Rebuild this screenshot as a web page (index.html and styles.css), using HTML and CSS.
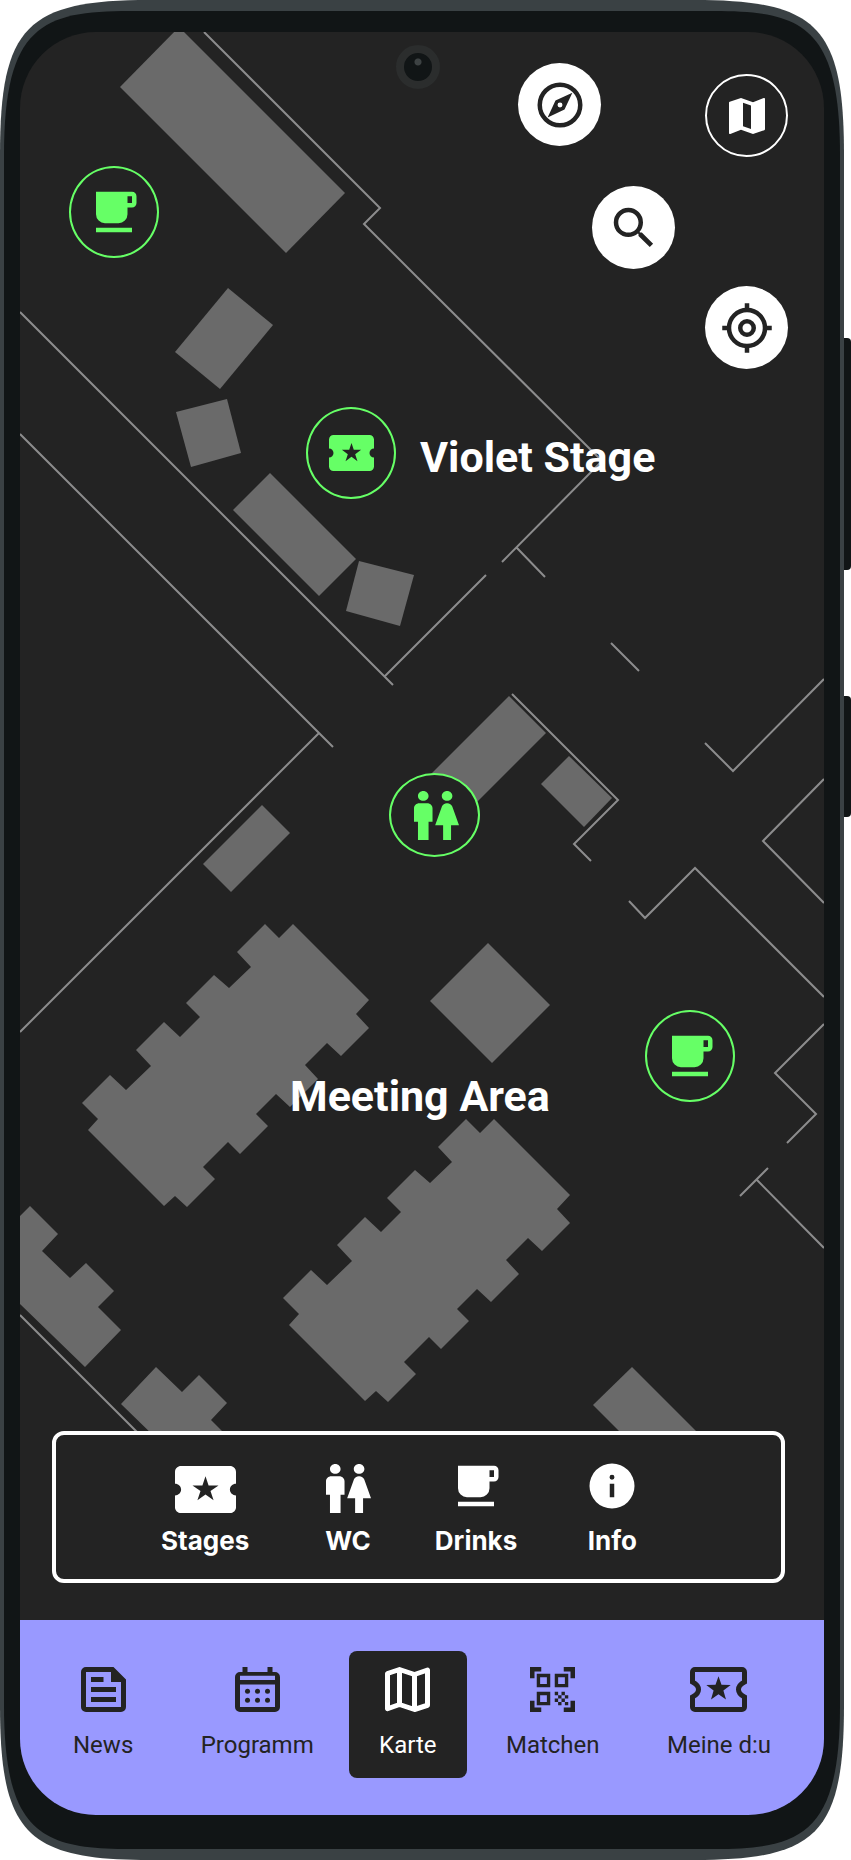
FILE: index.html
```html
<!DOCTYPE html>
<html lang="de">
<head>
  <meta charset="utf-8">
  <meta name="viewport" content="width=device-width, initial-scale=1">
  <title>Karte</title>
  <link rel="stylesheet" href="styles.css">
</head>
<body>

  <!-- shared icons -->
  <svg class="sprite" aria-hidden="true">
    <symbol id="cup" viewBox="0 0 24 24">
      <path fill-rule="evenodd" d="M4 3h16a2 2 0 0 1 2 2v3a2 2 0 0 1-2 2h-2v3a4 4 0 0 1-4 4H8a4 4 0 0 1-4-4zM18 5v3h2V5zM4 19h16v2H4z"/>
    </symbol>
    <symbol id="ticket" viewBox="2 4 20 16" preserveAspectRatio="none">
      <path fill-rule="evenodd" d="M20 12c0-1.100.9-2 2-2V6c0-1.100-.9-2-2-2H4c-1.100 0-2 .9-2 2v4c1.100 0 2 .9 2 2s-.9 2-2 2v4c0 1.100.9 2 2 2h16c1.100 0 2-.9 2-2v-4c-1.100 0-2-.9-2-2zM12 7.500l1.010 3.110h3.270l-2.640 1.920 1.010 3.110L12 13.720l-2.650 1.920 1.010-3.110-2.640-1.920h3.270z"/>
    </symbol>
    <symbol id="wc" viewBox="4 2 17 20" preserveAspectRatio="none">
      <path d="M5.500 22v-7.500H4V9c0-1.100.9-2 2-2h3c1.100 0 2 .9 2 2v5.500H9.500V22h-4zM18 22v-6h3l-2.540-7.630C18.180 7.550 17.420 7 16.560 7h-.12c-.86 0-1.630.55-1.900 1.370L12 16h3v6h3zM7.500 6c1.110 0 2-.89 2-2s-.89-2-2-2-2 .89-2 2 .89 2 2 2zm9 0c1.110 0 2-.89 2-2s-.89-2-2-2-2 .89-2 2 .89 2 2 2z"/>
    </symbol>
  </svg>

  <div class="phone">
    <svg class="phone-frame" viewBox="0 0 844 1860" preserveAspectRatio="none" aria-hidden="true">
      <path fill="#3a4144" d="M150 0H694C817 0 844 26 844 155V1705C844 1834 817 1860 694 1860H150C27 1860 0 1834 0 1705V155C0 26 27 0 150 0z"/>
      <path fill="#111516" d="M130 11H714C802 11 840 26 840 155V1705C840 1834 802 1849 714 1849H130C42 1849 4 1834 4 1705V155C4 26 42 11 130 11z"/>
    </svg>
    <span class="side-button volume"></span>
    <span class="side-button power"></span>

    <div class="screen">
      <main class="map">
        <svg class="map-drawing" viewBox="20 32 804 1588" preserveAspectRatio="xMinYMin slice" aria-hidden="true">
          <g fill="#6a6a6a">
            <path d="M179 27L345 193 286 253 120 87z"/>
            <path d="M228 288L273 325 220 389 175 352z"/>
            <path d="M176 412L227 399 241 453 191 467z"/>
            <path d="M270 473L356 559 319 596 233 510z"/>
            <path d="M359 561L414 575 400 626 346 611z"/>
            <path d="M509 696L546 733 450 829 413 792z"/>
            <path d="M569 756L612 798 584 827 541 784z"/>
            <path d="M262 805L290 833 231 892 203 864z"/>
            <path d="M488 943L550 1005 492 1063 430 1001z"/>
            <path id="hall" d="M265 924L279 938 293 924 369 1000 356 1014 369 1028 341 1056 327 1043 305 1065 318 1079 290 1107 276 1094 256 1114 268 1126 240 1154 228 1142 203 1167 215 1179 187 1207 175 1196 164 1206 88 1130 98 1119 82 1103 110 1075 126 1090 151 1066 136 1050 164 1022 180 1037 200 1017 186 1003 214 975 229 988 251 967 237 952z"/>
            <use href="#hall" x="201" y="195"/>
            <path d="M20 1216L30 1206 58 1234 42 1251 70 1278 86 1263 114 1291 98 1307 121 1330 85 1367 20 1304z"/>
            <path d="M156 1367L182 1392 199 1375 227 1403 211 1420 231 1440 158 1440 121 1404z"/>
            <path d="M632 1367L705 1440H628L593 1405z"/>
          </g>
          <g class="walls">
            <path d="M204 32L380 208 364 224 425 285 602 461 502 562M517 548L545 577"/>
            <path d="M20 312L393 685M385 676L486 575M20 434L333 747M319 733L20 1032"/>
            <path d="M611 643L639 671M705 743L733 771 824 679"/>
            <path d="M512 694L618 800 574 844 591 861"/>
            <path d="M629 901L645 918 695 868 824 997M824 779L763 841 824 903"/>
            <path d="M824 1024L775 1073 816 1114 787 1143M768 1168L740 1196M757 1180L824 1248"/>
            <path d="M20 1315L145 1440"/>
          </g>
        </svg>

        <span class="camera"></span>

        <button class="pin pin-bar" aria-label="Drinks"><svg class="icon"><use href="#cup"/></svg></button>
        <button class="pin pin-stage" aria-label="Violet Stage"><svg class="icon-ticket"><use href="#ticket"/></svg></button>
        <button class="pin pin-wc" aria-label="WC"><svg class="icon-wc"><use href="#wc"/></svg></button>
        <button class="pin pin-cafe" aria-label="Drinks"><svg class="icon"><use href="#cup"/></svg></button>

        <h2 class="place place-stage">Violet Stage</h2>
        <h2 class="place place-meeting">Meeting Area</h2>

        <button class="round compass" aria-label="Kompass">
          <svg class="icon" viewBox="0 0 24 24">
            <circle class="outline" cx="12" cy="12" r="9"/>
            <path fill-rule="evenodd" d="M6.500 17.500l7.510-3.490L17.500 6.500 9.990 9.990zM12 10.900a1.100 1.100 0 1 1 0 2.200 1.100 1.100 0 0 1 0-2.200z"/>
          </svg>
        </button>
        <button class="round layers" aria-label="Karte">
          <svg class="icon-small" viewBox="0 0 24 24">
            <path fill-rule="evenodd" d="M20.500 3l-.16.03L15 5.100 9 3 3.360 4.900c-.21.07-.36.25-.36.48V20.500c0 .28.22.5.5.5l.16-.03L9 18.900l6 2.100 5.640-1.900c.21-.07.36-.25.36-.48V3.500c0-.28-.22-.5-.5-.5zM14 18.500l-4-1.400V5.400l4 1.400z"/>
          </svg>
        </button>
        <button class="round search" aria-label="Suche">
          <svg class="icon" viewBox="0 0 24 24">
            <path d="M15.500 14h-.79l-.28-.27A6.470 6.470 0 0 0 16 9.500 6.500 6.500 0 1 0 9.500 16c1.610 0 3.090-.59 4.230-1.570l.27.28v.79l5 4.990L20.490 19l-4.990-5zm-6 0C7.010 14 5 11.990 5 9.500S7.010 5 9.500 5 14 7.010 14 9.500 11.990 14 9.500 14z"/>
          </svg>
        </button>
        <button class="round locate" aria-label="Standort">
          <svg class="icon outline" viewBox="0 0 24 24">
            <circle cx="12" cy="12" r="8"/>
            <circle cx="12" cy="12" r="3"/>
            <path d="M12 1v3M12 20v3M1 12h3M20 12h3"/>
          </svg>
        </button>

        <div class="legend">
          <button class="legend-item legend-stages">
            <span class="legend-icon"><svg class="icon-ticket"><use href="#ticket"/></svg></span>
            Stages
          </button>
          <button class="legend-item">
            <span class="legend-icon"><svg class="icon-wc"><use href="#wc"/></svg></span>
            WC
          </button>
          <button class="legend-item legend-drinks">
            <span class="legend-icon"><svg class="icon"><use href="#cup"/></svg></span>
            Drinks
          </button>
          <button class="legend-item">
            <span class="legend-icon">
              <svg class="icon" viewBox="0 0 24 24">
                <path fill-rule="evenodd" d="M12 2a10 10 0 1 1 0 20 10 10 0 0 1 0-20zM11 11v6h2v-6zM12 7a1.100 1.100 0 1 0 0 2.200A1.100 1.100 0 0 0 12 7z"/>
              </svg>
            </span>
            Info
          </button>
        </div>
      </main>

      <nav class="tabs">
        <a class="tab" href="#">
          <svg class="tab-icon" viewBox="3 3 18 18">
            <path fill-rule="evenodd" d="M5 3h11l5 5v11a2 2 0 0 1-2 2H5a2 2 0 0 1-2-2V5a2 2 0 0 1 2-2zM5 5v14h14V9h-4V5zM7 7h5v2H7zM7 11h10v2H7zM7 15h10v2H7z"/>
          </svg>
          News
        </a>
        <a class="tab" href="#">
          <svg class="tab-icon" viewBox="3 3 18 18">
            <path fill-rule="evenodd" d="M6 3h2v2h8V3h2v2h1a2 2 0 0 1 2 2v12a2 2 0 0 1-2 2H5a2 2 0 0 1-2-2V7a2 2 0 0 1 2-2h1zM5 6.500v1.700h14V6.500zM5 10v9h14v-9z"/>
            <circle cx="8" cy="12.700" r="1"/><circle cx="12" cy="12.700" r="1"/><circle cx="16" cy="12.700" r="1"/>
            <circle cx="8" cy="16.300" r="1"/><circle cx="12" cy="16.300" r="1"/><circle cx="16" cy="16.300" r="1"/>
          </svg>
          Programm
        </a>
        <a class="tab active" href="#" aria-current="page">
          <svg class="tab-icon" viewBox="3 3 18 18">
            <path class="outline" stroke-linejoin="round" d="M4 5.600L8.800 4l6 2L20 4.200V18.300L14.800 20l-6-2L4 19.700zM8.800 4v14M14.800 6v14"/>
          </svg>
          Karte
        </a>
        <a class="tab" href="#">
          <svg class="tab-icon" viewBox="2 2 20 20">
            <path d="M9.500 6.500v3h-3v-3h3M11 5H5v6h6V5zm-1.500 9.500v3h-3v-3h3M11 13H5v6h6v-6zm6.500-6.500v3h-3v-3h3M19 5h-6v6h6V5zm-6 8h1.500v1.500H13V13zm1.500 1.500H16V16h-1.500v-1.500zM16 13h1.500v1.500H16V13zm-3 3h1.500v1.500H13V16zm1.500 1.500H16V19h-1.500v-1.500zM16 16h1.500v1.500H16V16zm1.500-1.500H19V16h-1.500v-1.500zm0 3H19V19h-1.500v-1.500zM22 7h-2V4h-3V2h5v5zm0 15v-5h-2v3h-3v2h5zM2 22h5v-2H4v-3H2v5zM2 2v5h2V4h3V2H2z"/>
          </svg>
          Matchen
        </a>
        <a class="tab" href="#">
          <svg class="tab-icon tab-icon-wide" viewBox="0 0 57 45">
            <path fill="none" stroke="currentColor" stroke-width="5" d="M5 2.500h47a2.500 2.500 0 0 1 2.500 2.500v10c-4 2-6 4.500-6 7.500s2 5.500 6 7.500v10a2.500 2.500 0 0 1-2.500 2.500H5A2.500 2.500 0 0 1 2.500 40V30c4-2 6-4.500 6-7.500s-2-5.500-6-7.500V5A2.500 2.500 0 0 1 5 2.500z"/>
            <path d="M28.500 9.200l3 8.600 9.200.2-7.300 5.600 2.600 8.800-7.500-5.200-7.500 5.200 2.600-8.800-7.300-5.600 9.200-.2z"/>
          </svg>
          Meine d:u
        </a>
      </nav>
    </div>
  </div>

</body>
</html>
```

FILE: styles.css
```css
* {
  box-sizing: border-box;
}

body {
  margin: 0;
  background: #fff;
  font-family: Roboto, Arial, sans-serif;
}

button {
  padding: 0;
  border: 0;
  background: none;
  cursor: pointer;
}

svg {
  display: block;
  fill: currentColor;
}

.sprite {
  position: absolute;
  width: 0;
  height: 0;
}

/* phone */
.phone {
  position: relative;
  display: flex;
  min-height: 100vh;
  margin-right: 7px;
  padding: 32px 20px 45px;
}

.phone-frame {
  position: absolute;
  top: 0;
  left: 0;
  width: 100%;
  height: 100%;
}

.side-button {
  position: absolute;
  right: -7px;
  width: 7px;
  background: #111516;
  border-radius: 0 4px 4px 0;
}

.volume {
  top: 338px;
  height: 232px;
}

.power {
  top: 696px;
  height: 121px;
}

.screen {
  position: relative;
  flex: 1;
  display: flex;
  flex-direction: column;
  overflow: hidden;
  border-radius: 76px;
  background: #232323;
}

.camera {
  position: absolute;
  top: 13px;
  left: 50%;
  width: 44px;
  height: 44px;
  margin-left: -26px;
  border: 8px solid #2b2d2d;
  border-radius: 50%;
  background: radial-gradient(circle at 50% 32%, #3d4243 3px, #111516 4px);
}

/* map */
.map {
  position: relative;
  flex: 1;
  display: flex;
  flex-direction: column;
  justify-content: flex-end;
  padding: 0 39px 37px 32px;
  color: #fff;
}

.map-drawing {
  position: absolute;
  top: 0;
  left: 0;
  width: 100%;
  height: 100%;
}

.walls {
  fill: none;
  stroke: #8c8c8d;
  stroke-width: 2;
}

.outline {
  fill: none;
  stroke: currentColor;
  stroke-width: 2;
}

.icon {
  width: 54px;
  height: 54px;
}

.icon-small {
  width: 48px;
  height: 48px;
}

.icon-ticket {
  width: 45px;
  height: 36px;
}

.icon-wc {
  width: 45px;
  height: 49px;
}

.pin {
  position: absolute;
  display: flex;
  align-items: center;
  justify-content: center;
  width: 90px;
  height: 92px;
  border: 2px solid #6f6;
  border-radius: 50%;
  background: #232323;
  color: #6f6;
}

.pin-bar {
  top: 134px;
  left: 49px;
}

.pin-stage {
  top: 375px;
  left: 286px;
}

.pin-wc {
  top: 741px;
  left: 369px;
  width: 91px;
  height: 84px;
  padding-left: 4px;
}

.pin-cafe {
  top: 978px;
  left: 625px;
}

.place {
  position: absolute;
  margin: 0;
  font-size: 43px;
  line-height: 52px;
  font-weight: 700;
  white-space: nowrap;
}

.place-stage {
  top: 399px;
  left: 400px;
}

.place-meeting {
  top: 1038px;
  left: 270px;
}

.round {
  position: absolute;
  display: flex;
  align-items: center;
  justify-content: center;
  width: 83px;
  height: 83px;
  border-radius: 50%;
  background: #fff;
  color: #232323;
}

.compass {
  top: 31px;
  right: 223px;
}

.layers {
  top: 42px;
  right: 36px;
  border: 2px solid #fff;
  background: #232323;
  color: #fff;
}

.search {
  top: 154px;
  right: 149px;
}

.locate {
  top: 254px;
  right: 36px;
}

/* legend */
.legend {
  position: relative;
  display: flex;
  gap: 64px;
  padding: 24px 20px 22px 105px;
  border: 4px solid #fff;
  border-radius: 12px;
  background: #232323;
}

.legend-item {
  display: flex;
  flex-direction: column;
  align-items: center;
  gap: 12px;
  color: #fff;
  font-family: Inter, Arial, sans-serif;
  font-size: 26px;
  line-height: 32px;
  font-weight: 700;
}

.legend-icon {
  display: flex;
  align-items: flex-end;
  justify-content: center;
  height: 54px;
}

.legend .icon {
  margin: 0 -2px;
}

.legend .icon-ticket {
  width: 61px;
  height: 47px;
}

.legend-stages {
  margin-right: 12px;
}

.legend-drinks {
  margin-right: 6px;
}

/* bottom navigation */
.tabs {
  display: flex;
  justify-content: space-between;
  align-items: flex-start;
  padding: 31px 53px 37px;
  background: #99f;
}

.tab {
  display: flex;
  flex-direction: column;
  align-items: center;
  gap: 17px;
  padding: 16px 0 17px;
  color: #232323;
  font-size: 24px;
  line-height: 32px;
  text-decoration: none;
  white-space: nowrap;
}

.tab-icon {
  width: 45px;
  height: 45px;
}

.tab-icon-wide {
  width: 57px;
}

.active {
  margin: 0 -28px 0 -32px;
  padding-right: 30px;
  padding-left: 30px;
  border-radius: 8px;
  background: #232323;
  color: #fff;
}
```
